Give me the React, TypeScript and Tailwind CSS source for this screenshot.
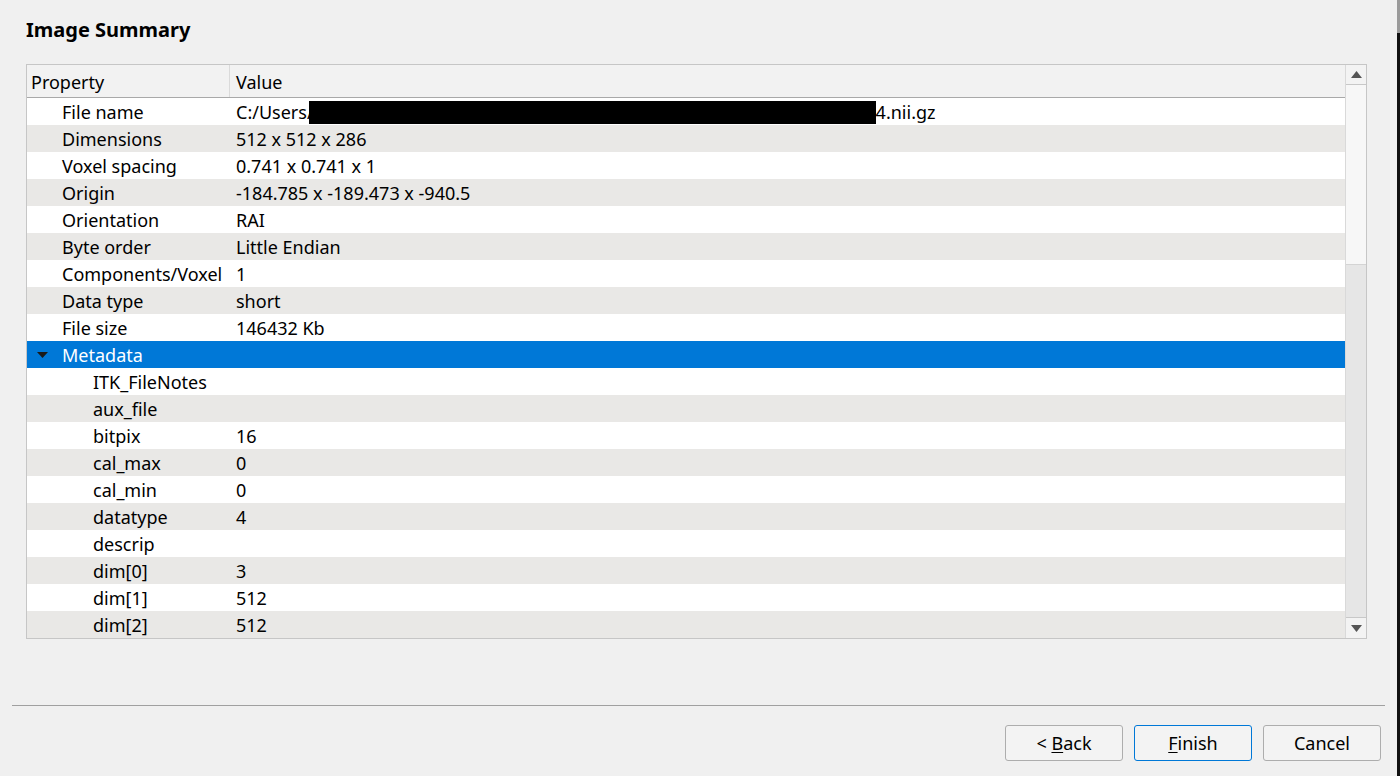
import React from "react";

type Row = { label: string; value?: React.ReactNode; depth: 0 | 1; group?: boolean };

const ROWS: Row[] = [
  {
    label: "File name",
    depth: 0,
    value: (
      <span className="flex items-center">
        C:/Users/
        <span className="-ml-[5px] inline-block h-[23px] w-[567px] bg-black" />
        4.nii.gz
      </span>
    ),
  },
  { label: "Dimensions", value: "512 x 512 x 286", depth: 0 },
  { label: "Voxel spacing", value: "0.741 x 0.741 x 1", depth: 0 },
  { label: "Origin", value: "-184.785 x -189.473 x -940.5", depth: 0 },
  { label: "Orientation", value: "RAI", depth: 0 },
  { label: "Byte order", value: "Little Endian", depth: 0 },
  { label: "Components/Voxel", value: "1", depth: 0 },
  { label: "Data type", value: "short", depth: 0 },
  { label: "File size", value: "146432 Kb", depth: 0 },
  { label: "Metadata", depth: 0, group: true },
  { label: "ITK_FileNotes", depth: 1 },
  { label: "aux_file", depth: 1 },
  { label: "bitpix", value: "16", depth: 1 },
  { label: "cal_max", value: "0", depth: 1 },
  { label: "cal_min", value: "0", depth: 1 },
  { label: "datatype", value: "4", depth: 1 },
  { label: "descrip", depth: 1 },
  { label: "dim[0]", value: "3", depth: 1 },
  { label: "dim[1]", value: "512", depth: 1 },
  { label: "dim[2]", value: "512", depth: 1 },
];

function SummaryRow({ row, index }: { row: Row; index: number }) {
  const bg = row.group ? "bg-[#0078d7] text-white" : index % 2 === 0 ? "bg-white" : "bg-[#e9e8e6]";
  return (
    <div className={`flex h-[27px] items-center pt-[1px] ${bg}`}>
      <div className="relative flex h-full w-[203px] shrink-0 items-center">
        {row.group && (
          <svg className="absolute left-[10px] top-[10px]" width="11" height="6" viewBox="0 0 11 6">
            <path d="M0 0 H11 L5.5 6 Z" fill="#1a1a1a" />
          </svg>
        )}
        <span className={row.depth === 1 ? "pl-[66px]" : "pl-[35px]"}>{row.label}</span>
      </div>
      <div className="flex-1 whitespace-nowrap pl-[6px]">{row.value}</div>
    </div>
  );
}

function Scrollbar() {
  return (
    <div className="flex w-[21px] shrink-0 flex-col border-l border-[#d9d9d9] bg-[#e6e6e6]">
      <div className="flex h-[20px] items-center justify-center border-b border-[#c8c8c8] bg-[#f3f3f3]">
        <svg width="11" height="7" viewBox="0 0 11 7">
          <path d="M0 7 L5.5 0 L11 7 Z" fill="#555" />
        </svg>
      </div>
      <div className="h-[180px] border-b border-[#d4d4d4] bg-[#f7f7f7]" />
      <div className="flex-1" />
      <div className="flex h-[21px] items-center justify-center border-t border-[#c8c8c8] bg-[#f3f3f3]">
        <svg width="11" height="7" viewBox="0 0 11 7">
          <path d="M0 0 H11 L5.5 7 Z" fill="#555" />
        </svg>
      </div>
    </div>
  );
}

function DialogButton({ children, primary }: { children: React.ReactNode; primary?: boolean }) {
  return (
    <button
      className={`h-[36px] w-[118px] rounded-[3px] border bg-[#f3f3f3] text-[18px] text-black ${
        primary ? "border-[#0078d7]" : "border-[#adadad]"
      }`}
    >
      {children}
    </button>
  );
}

export default function App() {
  return (
    <div
      className="flex h-[776px] w-[1400px] overflow-hidden bg-[#f0f0f0] text-[18px] text-black"
      style={{ fontFamily: '"Noto Sans", "Open Sans", sans-serif' }}
    >
      <div className="flex flex-1 flex-col">
        <h1 className="pl-[26px] pt-[17px] text-[20px] font-bold leading-[26px]">Image Summary</h1>

        <div className="ml-[26px] mt-[21px] flex w-[1341px] border border-[#c6c6c6] bg-white">
          <div className="flex flex-1 flex-col">
            <div className="flex h-[33px] border-b border-[#a9a9a9] bg-[#f2f2f2]">
              <div className="flex w-[203px] items-center border-r border-[#dadada] pl-[4px] pt-[3px]">Property</div>
              <div className="flex flex-1 items-center pl-[6px] pt-[3px]">Value</div>
            </div>
            {ROWS.map((r, i) => (
              <SummaryRow key={r.label} row={r} index={i} />
            ))}
          </div>
          <Scrollbar />
        </div>

        <div className="mx-[12px] mt-[66px] h-[2px] border-t border-[#a0a0a0] border-b-white" />

        <div className="flex justify-end gap-[11px] pr-[16px] pt-[18px]">
          <DialogButton>
            &lt; <span className="underline underline-offset-2">B</span>ack
          </DialogButton>
          <DialogButton primary>
            <span className="underline underline-offset-2">F</span>inish
          </DialogButton>
          <DialogButton>Cancel</DialogButton>
        </div>
      </div>
      <div className="flex w-[3px] flex-col">
        <div className="h-[33px] bg-[#9a9a9a]" />
        <div className="flex-1 bg-[#111]" />
      </div>
    </div>
  );
}
